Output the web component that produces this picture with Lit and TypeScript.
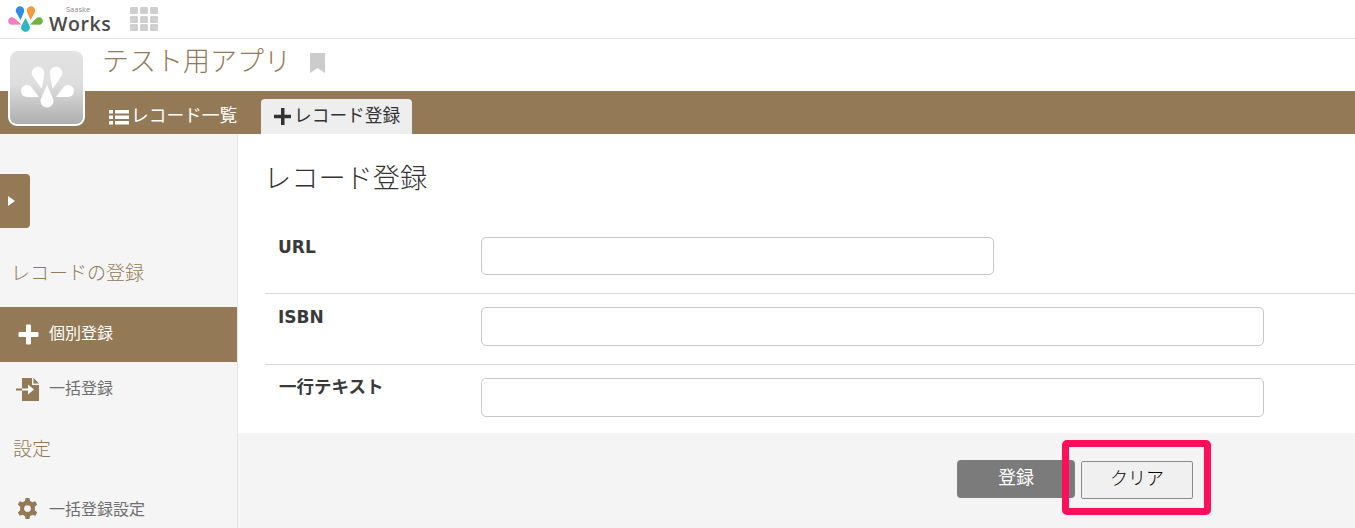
import { LitElement, html, css, svg } from "lit";
import { customElement } from "lit/decorators.js";

// A drop: round head centred on (cx, cy), tip at (tx, ty).
const drop = (cx: number, cy: number, r: number, tx: number, ty: number, fill: string) => {
  const a = Math.atan2(ty - cy, tx - cx);
  const phi = Math.acos(r / Math.hypot(tx - cx, ty - cy));
  const x1 = cx + r * Math.cos(a + phi), y1 = cy + r * Math.sin(a + phi);
  const x2 = cx + r * Math.cos(a - phi), y2 = cy + r * Math.sin(a - phi);
  return svg`<path d="M${tx} ${ty}L${x1} ${y1}A${r} ${r} 0 1 1 ${x2} ${y2}Z" fill="${fill}"/>`;
};

@customElement("app-root")
export class AppRoot extends LitElement {
  static styles = css`
    :host { display: block; width: 1355px; height: 528px; overflow: hidden; position: relative; background: #fff;
      font-family: "Noto Sans CJK JP", "Noto Sans", sans-serif; color: #333; }
    .top { height: 38px; border-bottom: 1px solid #e5e5e5; display: flex; align-items: center; padding-left: 8px; }
    .logo { display: block; width: 36px; height: 32px; }
    .brand { display: flex; flex-direction: column; margin-left: 5px; width: 62px; color: #4a4a4a; font-family: "Open Sans", sans-serif; }
    .brand small { font-size: 7.5px; line-height: 8px; margin-left: 17px; color: #888; }
    .brand b { font-size: 19.5px; line-height: 21px; font-weight: 600; letter-spacing: .6px; }
    .grid { margin-left: 19px; display: grid; grid-template-columns: repeat(3, 8px); grid-auto-rows: 7px; gap: 1.5px 2px; }
    .grid i { background: #cfcfcf; border-radius: 1px; }
    .apphead { height: 52px; display: flex; align-items: flex-start; padding-left: 102px; color: #937955; }
    .apptitle { font-size: 27px; line-height: 42px; font-weight: 300; }
    .mark { margin: 14px 0 0 18px; display: block; }
    .band { height: 43px; background: #937955; display: flex; align-items: flex-end; padding-left: 108px; }
    .tab { display: flex; align-items: center; height: 35px; font-size: 17.7px; font-weight: 400; white-space: nowrap; }
    .tab span { margin-bottom: 6px; }
    .tab.list { color: #fff; width: 153px; }
    .tab.cur { background: #eeeeee; color: #333; width: 151px; border-radius: 4px 4px 0 0; padding-left: 13px; box-sizing: border-box; }
    .tab svg { display: block; flex: none; margin-right: -1px; }
    .appicon { position: absolute; left: 8px; top: 51px; width: 77px; height: 75px; box-sizing: border-box; border: 2px solid #fff; border-top: 0; border-radius: 9px;
      background: linear-gradient(#e2e2e2 0%, #dedede 45%, #aeaeae 100%); }
    .appicon svg { display: block; }
    .body { display: flex; height: 394px; }
    .side { width: 238px; flex: none; box-sizing: border-box; background: #f5f5f5; border-right: 1px solid #e5e5e5; padding-top: 40px; color: #937955; }
    .toggle { width: 30px; height: 54px; background: #937955; border-radius: 0 4px 4px 0; display: flex; align-items: center; padding-left: 8px; box-sizing: border-box; }
    .toggle i { width: 0; height: 0; border-left: 7px solid #fff; border-top: 5.5px solid transparent; border-bottom: 5.5px solid transparent; }
    .head { font-size: 19px; font-weight: 300; line-height: 28px; padding-left: 13px; }
    .h1 { margin-top: 30px; margin-bottom: 21px; padding-left: 11px; }
    .h2 { margin-top: 17px; margin-bottom: 30px; }
    .item { height: 55px; display: flex; align-items: center; font-size: 16px; font-weight: 400; color: #6f6f6f; }
    .item span { margin-bottom: 6px; }
    .item .ic { width: 49px; display: flex; justify-content: flex-end; padding-right: 10px; box-sizing: border-box; flex: none; }
    .item svg { display: block; }
    .item svg.doc { margin-right: -1px; }
    .item.on { background: #937955; color: #fff; }
    .item.plain { height: 32px; }
    .item.plain span { margin-bottom: 0; }
    .main { flex: 1; display: flex; flex-direction: column; min-width: 0; }
    .form { height: 299px; padding-top: 18px; box-sizing: border-box; }
    h1 { margin: 0 0 0 26px; font-size: 27.2px; font-weight: 300; line-height: 48px; color: #333; }
    .rows { margin: 37px 0 0 27px; }
    .row { display: flex; padding-left: 14px; }
    .row + .row { border-top: 1px solid #d9d9d9; }
    .r1 { height: 56px; }
    .r2 { height: 71px; padding-top: 13px; box-sizing: border-box; }
    .r2b { padding-top: 13px; box-sizing: border-box; }
    .label { width: 202px; flex: none; font-size: 17.5px; line-height: 20px; font-weight: 700; color: #3a3a3a; margin-top: -2px; }
    .label.latin { font-family: "DejaVu Sans", sans-serif; font-size: 17px; margin-top: 0; margin-left: -1px; width: 203px; }
    .input { height: 39px; box-sizing: border-box; border: 1px solid #c8c8c8; border-radius: 5px; background: #fff; width: 783px; }
    .input.short { width: 513px; height: 38px; }
    .foot { flex: 1; background: #f4f4f4; display: flex; padding: 27px 0 0 719px; align-items: flex-start; }
    .reg { width: 118px; height: 38px; background: #7b7b7b; color: #fff; border-radius: 4px; font-size: 18px; font-weight: 400; display: flex; align-items: center; justify-content: center; margin-right: 6px; }
    .clearwrap { position: relative; margin-top: 1px; }
    .clear { width: 112px; height: 38px; box-sizing: border-box; border: 1px solid #8a8a8a; border-radius: 2px; background: #f0f0f0; color: #000; font-size: 18px; font-weight: 300; display: flex; align-items: center; justify-content: center; }
    .reg span, .clear span { margin-bottom: 6px; }
    .hl { position: absolute; left: -19px; top: -21px; width: 149px; height: 75px; box-sizing: border-box; border: 7px solid #ff0f5b; border-radius: 5px; }
  `;

  render() {
    return html`
      <div class="top">
        <svg class="logo" viewBox="8 3 36 32">
          ${drop(20, 10.5, 4.2, 20.5, 20, "#2f8be6")}
          ${drop(31, 10.5, 4.2, 30.5, 20, "#f59a3c")}
          ${drop(12, 21, 3.8, 21.5, 24.5, "#f57ec0")}
          ${drop(39, 21, 3.8, 30, 24.5, "#6db53f")}
          ${drop(25.500, 27.500, 4.4, 25.500, 18, "#29b8c4")}
        </svg>
        <div class="brand"><small>Saaske</small><b>Works</b></div>
        <div class="grid">${Array.from({ length: 9 }, () => html`<i></i>`)}</div>
      </div>
      <div class="apphead">
        <div class="apptitle">テスト用アプリ</div>
        <svg class="mark" width="17" height="21" viewBox="0 0 17 21"><path d="M1 0H16V20L8.500 15L1 20Z" fill="#cccccc"/></svg>
      </div>
      <div class="band">
        <div class="tab list">
          <svg width="24" height="16" viewBox="0 0 24 16" fill="#fff"><rect x="1" y="1" width="4" height="3.500"/><rect x="1" y="6.500" width="4" height="3.500"/><rect x="1" y="12" width="4" height="3.500"/><rect x="7" y="1" width="14" height="3.500"/><rect x="7" y="6.500" width="14" height="3.500"/><rect x="7" y="12" width="14" height="3.500"/></svg>
          <span>レコード一覧</span>
        </div>
        <div class="tab cur">
          <svg width="21" height="17" viewBox="0 0 21 17" fill="#333"><path d="M7 0H10.500V6.700H17V10.200H10.500V17H7V10.200H0V6.700H7Z"/></svg>
          <span>レコード登録</span>
        </div>
      </div>
      <div class="appicon">
        <svg width="73" height="73" viewBox="10 51 73 73">
          ${drop(38, 73, 6.3, 42, 89, "#fff")}
          ${drop(56, 73, 6.3, 52.500, 89, "#fff")}
          ${drop(27, 91, 6, 39, 97, "#fff")}
          ${drop(68, 91, 6, 56, 97, "#fff")}
          ${drop(47, 101, 6.5, 47, 85, "#fff")}
        </svg>
      </div>
      <div class="body">
        <aside class="side">
          <div class="toggle"><i></i></div>
          <div class="head h1">レコードの登録</div>
          <div class="item on">
            <div class="ic"><svg width="21" height="21" viewBox="0 0 21 21" fill="#fff"><path d="M8 1.500Q8 0.500 9 0.500H12Q13 0.500 13 1.500V8H19.500Q20.500 8 20.500 9V12Q20.500 13 19.500 13H13V19.500Q13 20.500 12 20.500H9Q8 20.500 8 19.500V13H1.500Q0.500 13 0.500 12V9Q0.500 8 1.500 8H8Z"/></svg></div>
            <span>個別登録</span>
          </div>
          <div class="item">
            <div class="ic"><svg class="doc" width="24" height="23" viewBox="0 0 24 23"><path d="M6 0H16V7H23V23H6Z" fill="#937955"/><path d="M17.500 0L23 5.500H17.500Z" fill="#937955"/><rect x="0" y="10.500" width="6" height="2" fill="#937955"/><path d="M6 10.500H12V6.500L18 11.500L12 16.500V12.500H6Z" fill="#fff"/></svg></div>
            <span>一括登録</span>
          </div>
          <div class="head h2">設定</div>
          <div class="item plain">
            <div class="ic"><svg width="23" height="23" viewBox="0 0 24 24" fill="#937955"><path fill-rule="evenodd" d="M10 1H14L14.700 4.300C15.500 4.600 16.200 5 16.900 5.500L20.100 4.400L22.100 7.900L19.600 10.100C19.700 11 19.700 12.900 19.600 13.900L22.100 16.100L20.100 19.600L16.900 18.500C16.200 19 15.500 19.400 14.700 19.700L14 23H10L9.300 19.700C8.500 19.400 7.800 19 7.100 18.500L3.900 19.600L1.900 16.100L4.400 13.900C4.300 12.900 4.300 11 4.400 10.100L1.900 7.900L3.900 4.400L7.100 5.500C7.800 5 8.500 4.600 9.300 4.300ZM12 8.500A3.500 3.500 0 1 0 12 15.500A3.500 3.500 0 1 0 12 8.500Z"/></svg></div>
            <span>一括登録設定</span>
          </div>
        </aside>
        <main class="main">
          <section class="form">
            <h1>レコード登録</h1>
            <div class="rows">
              <div class="row r1"><div class="label latin">URL</div><div class="input short"></div></div>
              <div class="row r2"><div class="label latin">ISBN</div><div class="input"></div></div>
              <div class="row r2b"><div class="label">一行テキスト</div><div class="input"></div></div>
            </div>
          </section>
          <div class="foot">
            <div class="reg"><span>登録</span></div>
            <div class="clearwrap">
              <div class="clear"><span>クリア</span></div>
              <div class="hl"></div>
            </div>
          </div>
        </main>
      </div>
    `;
  }
}
